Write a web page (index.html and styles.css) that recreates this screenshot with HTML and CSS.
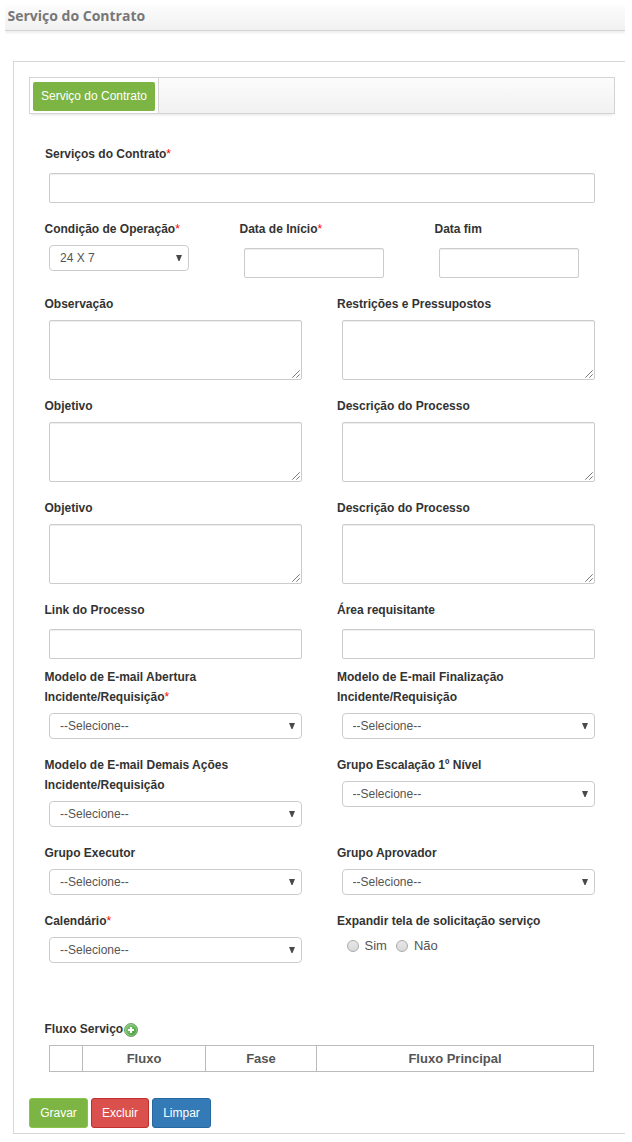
FILE: index.html
```html
<!DOCTYPE html>
<html lang="pt-BR">
<head>
<meta charset="utf-8">
<title>Serviço do Contrato</title>
<link rel="stylesheet" href="styles.css">
</head>
<body>
<svg class="defs" width="0" height="0">
  <symbol id="grip" viewBox="0 0 8 8"><path d="M0.3 7.7L7.7 0.3M4.3 7.7L7.7 4.3" stroke="#555" stroke-width=".8" fill="none"/></symbol>
  <symbol id="arrow" viewBox="0 0 6 6"><path d="M0 0H6L3.5 6H2.5Z" fill="#4a4a4a"/></symbol>
</svg>
<header class="page-head"><h1>Serviço do Contrato</h1></header>
<main class="panel">
  <nav class="tabs"><div class="tab"><a class="tab-link">Serviço do Contrato</a></div></nav>
  <form class="form">
    <div class="row h75"><div class="field first"><label>Serviços do Contrato<i>*</i></label><input class="text" type="text"></div></div>
    <div class="row three h75">
      <div class="field"><label>Condição de Operação<i>*</i></label><div class="pick"><select><option>24 X 7</option></select><svg><use href="#arrow"/></svg></div></div>
      <div class="field"><label>Data de Início<i>*</i></label><input class="text" type="text"></div>
      <div class="field"><label>Data fim</label><input class="text" type="text"></div>
    </div>
    <div class="row two h102">
      <div class="field"><label>Observação</label><div class="area"><textarea></textarea><svg><use href="#grip"/></svg></div></div>
      <div class="field"><label>Restrições e Pressupostos</label><div class="area"><textarea></textarea><svg><use href="#grip"/></svg></div></div>
    </div>
    <div class="row two h102">
      <div class="field"><label>Objetivo</label><div class="area"><textarea></textarea><svg><use href="#grip"/></svg></div></div>
      <div class="field"><label>Descrição do Processo</label><div class="area"><textarea></textarea><svg><use href="#grip"/></svg></div></div>
    </div>
    <div class="row two h102">
      <div class="field"><label>Objetivo</label><div class="area"><textarea></textarea><svg><use href="#grip"/></svg></div></div>
      <div class="field"><label>Descrição do Processo</label><div class="area"><textarea></textarea><svg><use href="#grip"/></svg></div></div>
    </div>
    <div class="row two h67">
      <div class="field"><label>Link do Processo</label><input class="text" type="text"></div>
      <div class="field"><label>Área requisitante</label><input class="text" type="text"></div>
    </div>
    <div class="row two h88">
      <div class="field"><label>Modelo de E-mail Abertura<br>Incidente/Requisição<i>*</i></label><div class="pick"><select><option>--Selecione--</option></select><svg><use href="#arrow"/></svg></div></div>
      <div class="field"><label>Modelo de E-mail Finalização<br>Incidente/Requisição</label><div class="pick"><select><option>--Selecione--</option></select><svg><use href="#arrow"/></svg></div></div>
    </div>
    <div class="row two h88">
      <div class="field"><label>Modelo de E-mail Demais Ações<br>Incidente/Requisição</label><div class="pick"><select><option>--Selecione--</option></select><svg><use href="#arrow"/></svg></div></div>
      <div class="field"><label>Grupo Escalação 1º Nível</label><div class="pick"><select><option>--Selecione--</option></select><svg><use href="#arrow"/></svg></div></div>
    </div>
    <div class="row two h68">
      <div class="field"><label>Grupo Executor</label><div class="pick"><select><option>--Selecione--</option></select><svg><use href="#arrow"/></svg></div></div>
      <div class="field"><label>Grupo Aprovador</label><div class="pick"><select><option>--Selecione--</option></select><svg><use href="#arrow"/></svg></div></div>
    </div>
    <div class="row two h108">
      <div class="field"><label>Calendário<i>*</i></label><div class="pick"><select><option>--Selecione--</option></select><svg><use href="#arrow"/></svg></div></div>
      <div class="field"><label>Expandir tela de solicitação serviço</label>
        <div class="radios"><input type="radio" name="expand"><span class="sim">Sim</span><input type="radio" name="expand"><span>Não</span></div></div>
    </div>
    <div class="flow">
      <div class="flow-title"><label>Fluxo Serviço</label>
        <svg class="add" viewBox="0 0 14 14">
          <defs><linearGradient id="green" x1="0" y1="0" x2="1" y2="1"><stop offset="0" stop-color="#8dc984"/><stop offset=".5" stop-color="#69b65b"/><stop offset="1" stop-color="#348c2c"/></linearGradient></defs>
          <circle cx="7" cy="7" r="6.5" fill="url(#green)" stroke="#519749" stroke-width=".8"/>
          <circle cx="7" cy="7" r="5.5" fill="none" stroke="#b3dca9" stroke-width=".6"/>
          <path d="M7 4V10M4 7H10" stroke="#fff" stroke-width="2"/>
        </svg>
      </div>
      <table><tr><th class="c1"></th><th class="c2">Fluxo</th><th class="c3">Fase</th><th>Fluxo Principal</th></tr></table>
    </div>
  </form>
  <div class="actions"><button class="save">Gravar</button><button class="delete">Excluir</button><button class="clear">Limpar</button></div>
</main>
</body>
</html>
```

FILE: styles.css
```css
* { box-sizing: border-box; }
body { margin: 0; padding: 5px 7px 0 5px; background: #fff; color: #555; font: 12px/20px "Liberation Sans", Arial, sans-serif; }
.defs { display: none; }
.page-head { height: 26px; padding-left: 2.5px; background: linear-gradient(#fcfcfc, #f1f1f1); border-bottom: 1px solid #d4d4d4; box-shadow: 0 2px 2px #eee; clip-path: inset(0 0 -5px 0); }
.page-head h1 { margin: 0; font: bold 14px/22px "Open Sans", sans-serif; color: #777; }
.panel { margin: 30px 0 0 8px; height: 1073px; padding: 15px 10px 0 15px; border: 1px solid #d8d8d8; border-right: 0; }
.tabs { display: flex; height: 37px; border: 1px solid #d4d4d4; background: linear-gradient(#fcfcfc, #f1f1f1); box-shadow: 0 3px 3px -2px #e4e4e4; }
.tab { width: 129px; padding: 4px 3px 0; background: #fff; border-right: 1px solid #d4d4d4; }
.tab-link { display: block; height: 29px; border-radius: 2px; background: #7cb543; color: #fff; text-align: center; line-height: 28px; white-space: nowrap; }
.form { margin: 30px 0 0 15px; width: 585px; }
.row { display: grid; }
.two { grid-template-columns: 292.5px 292.5px; }
.three { grid-template-columns: repeat(3, 195px); }
.h75 { height: 75px; }
.h102 { height: 102px; }
.h67 { height: 67px; }
.h88 { height: 88px; }
.h68 { height: 68px; }
.h108 { height: 108px; }
label { display: block; padding-left: .5px; font-weight: bold; color: #333; white-space: nowrap; }
label i { font-style: normal; font-weight: normal; color: #f00; }
.first label { padding-left: 1px; }
.text { display: block; width: 253px; height: 30px; margin: 9px 0 0 5px; padding: 4px 6px; border: 1px solid #ccc; border-radius: 2px; box-shadow: inset 0 1px 1px #eee; }
.first .text { width: 546px; }
.three .text { width: 140px; }
.area { position: relative; width: 253px; height: 60px; margin: 6px 0 0 5px; }
textarea { display: block; width: 100%; height: 100%; border: 1px solid #ccc; border-radius: 2px; box-shadow: inset 0 1px 1px #eee; resize: none; }
.area svg { position: absolute; right: 2px; bottom: 2px; width: 8px; height: 8px; }
.pick { position: relative; width: 253px; height: 26px; margin: 6px 0 0 5px; }
.three .pick { width: 140px; }
.pick select { display: block; appearance: none; width: 100%; height: 100%; padding: 0 10px; border: 1px solid #ccc; border-radius: 4px; background: #fff; font: 12px "Liberation Sans", Arial, sans-serif; color: #555; }
.pick svg { position: absolute; right: 7px; top: 10px; width: 6px; height: 6px; }
.radios { display: flex; align-items: center; height: 20px; margin: 5px 0 0 10px; font-size: 13px; }
.radios input { appearance: none; width: 12px; height: 12px; margin: 0 6px 0 0; border: 1px solid #aaa; border-radius: 50%; background: linear-gradient(#e8e8e8, #d9d9d9); }
.sim { margin-right: 9px; }
.flow-title { display: flex; align-items: center; height: 20px; }
.add { width: 14px; height: 14px; margin: 2px 0 0 .5px; }
table { width: 545px; height: 27px; margin: 6px 0 0 5px; border-collapse: collapse; table-layout: fixed; }
th { padding: 0; border: 1px solid #bbb; font-size: 13px; line-height: 18px; }
.c1 { width: 33px; }
.c2 { width: 123px; }
.c3 { width: 111px; }
.actions { display: flex; gap: 3px; margin-top: 26px; }
button { height: 30px; padding: 0; border: 1px solid; border-radius: 3px; color: #fff; font: 12px "Liberation Sans", Arial, sans-serif; }
.save { width: 59px; background: #7cb543; border-color: #8bc34a; }
.delete { width: 58px; background: #d9504c; border-color: #c0302c; }
.clear { width: 59px; background: #337ab7; border-color: #2868a0; }
```
